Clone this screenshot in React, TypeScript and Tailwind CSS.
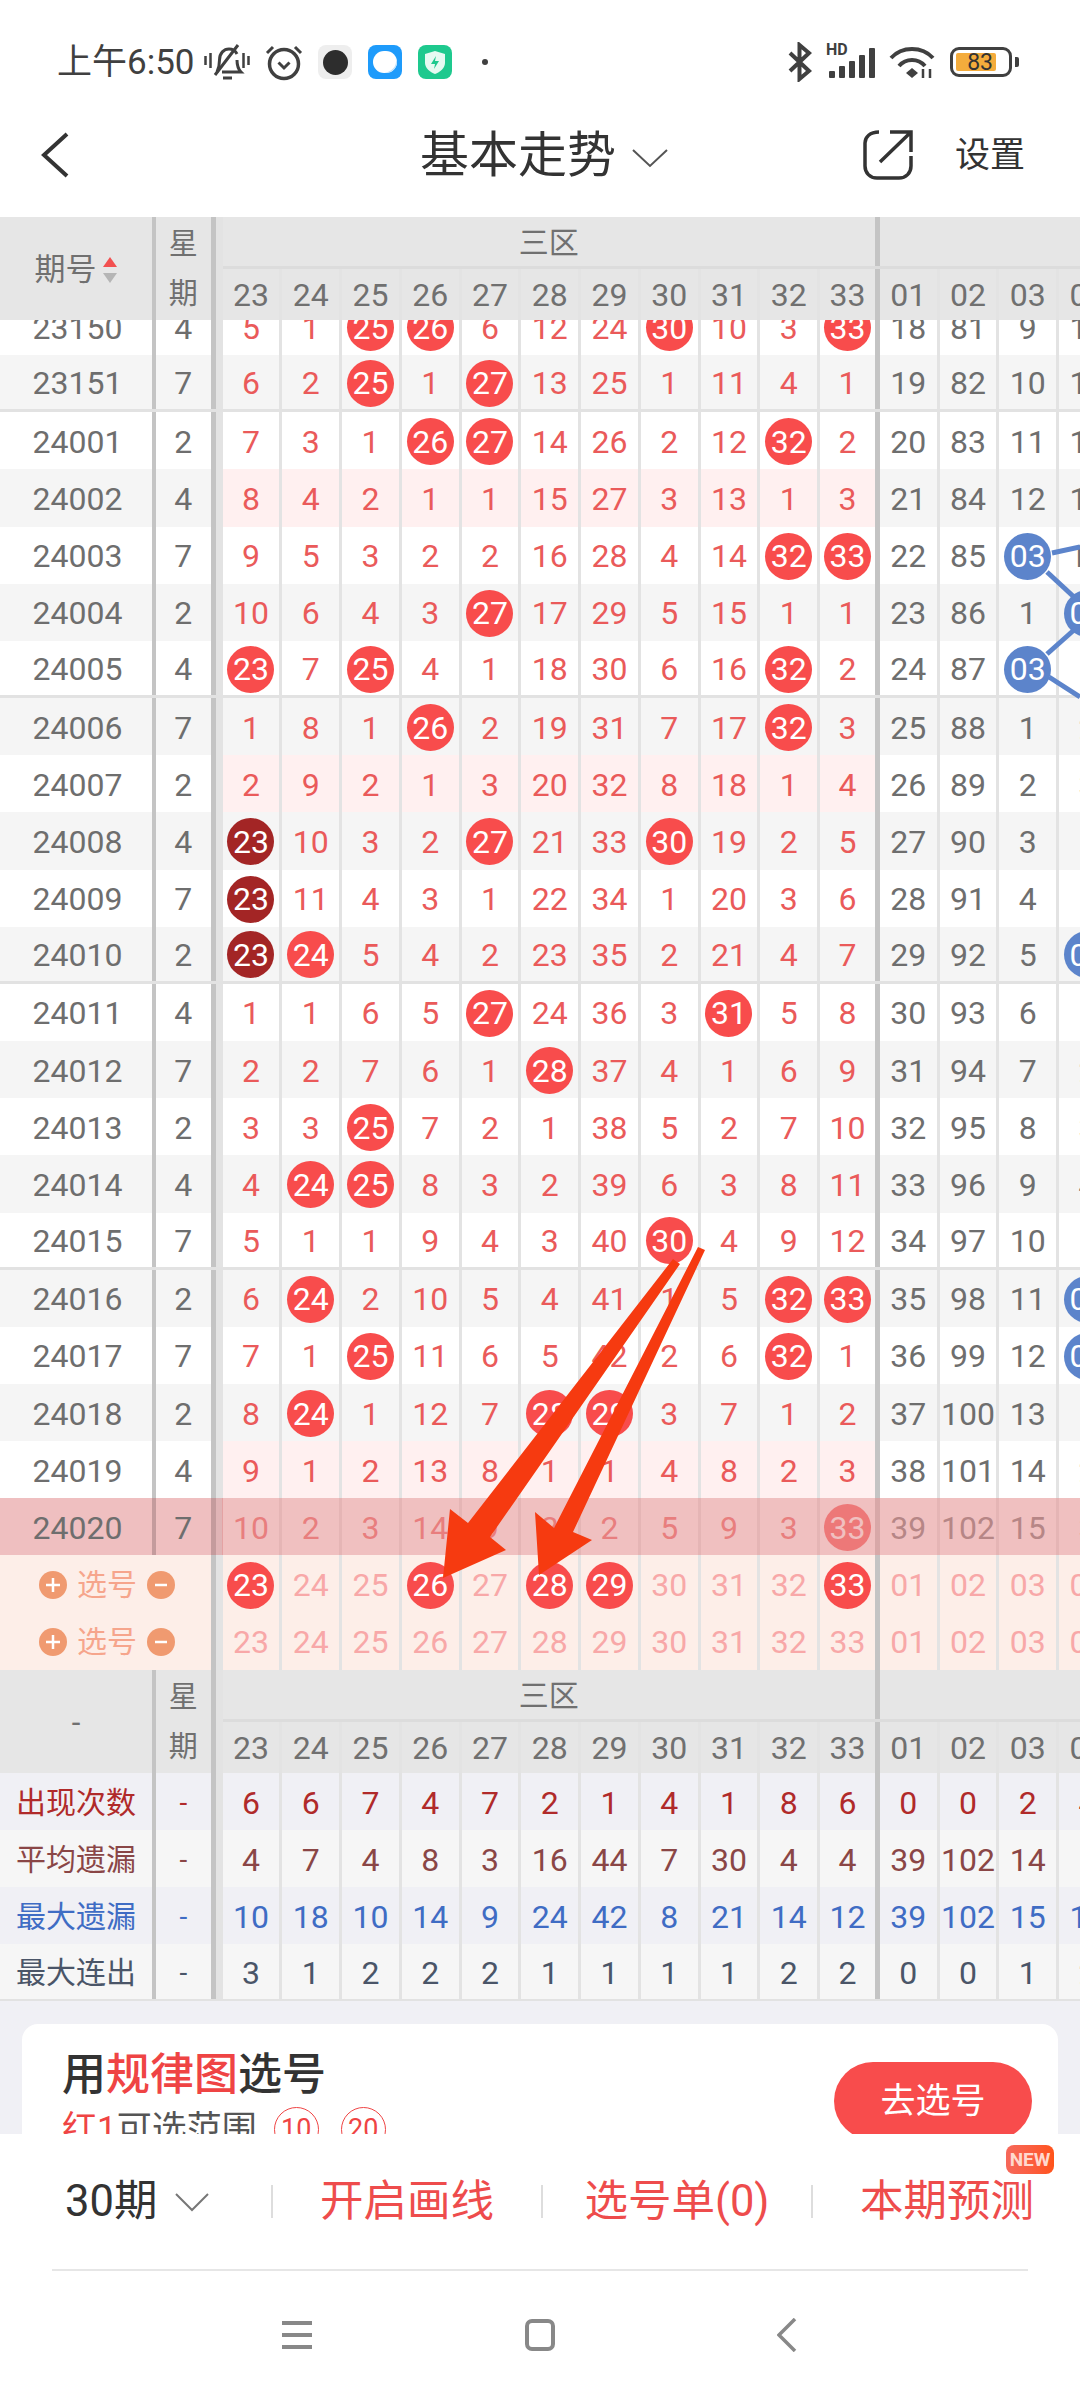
import { clsx } from 'clsx';

// Trend table rows: "*" red ball, "#" dark red ball, "@" blue ball
interface Row {
  id: string;
  week: string;
  cells: string;
  pink?: boolean;
  heavy?: boolean;
  band?: boolean;
}

const rows: Row[] = [
  { id: '23150', week: '4', cells: '5 1 *25 *26 6 12 24 *30 10 3 *33 18 81 9 10' },
  { id: '23151', week: '7', cells: '6 2 *25 1 *27 13 25 1 11 4 1 19 82 10 11', heavy: true },
  { id: '24001', week: '2', cells: '7 3 1 *26 *27 14 26 2 12 *32 2 20 83 11 12' },
  { id: '24002', week: '4', cells: '8 4 2 1 1 15 27 3 13 1 3 21 84 12 13', pink: true },
  { id: '24003', week: '7', cells: '9 5 3 2 2 16 28 4 14 *32 *33 22 85 @03 14' },
  { id: '24004', week: '2', cells: '10 6 4 3 *27 17 29 5 15 1 1 23 86 1 @04' },
  { id: '24005', week: '4', cells: '*23 7 *25 4 1 18 30 6 16 *32 2 24 87 @03 1', heavy: true },
  { id: '24006', week: '7', cells: '1 8 1 *26 2 19 31 7 17 *32 3 25 88 1 2' },
  { id: '24007', week: '2', cells: '2 9 2 1 3 20 32 8 18 1 4 26 89 2 3', pink: true },
  { id: '24008', week: '4', cells: '#23 10 3 2 *27 21 33 *30 19 2 5 27 90 3 5' },
  { id: '24009', week: '7', cells: '#23 11 4 3 1 22 34 1 20 3 6 28 91 4 5' },
  { id: '24010', week: '2', cells: '#23 *24 5 4 2 23 35 2 21 4 7 29 92 5 @04', heavy: true },
  { id: '24011', week: '4', cells: '1 1 6 5 *27 24 36 3 *31 5 8 30 93 6 1' },
  { id: '24012', week: '7', cells: '2 2 7 6 1 *28 37 4 1 6 9 31 94 7 2' },
  { id: '24013', week: '2', cells: '3 3 *25 7 2 1 38 5 2 7 10 32 95 8 3' },
  { id: '24014', week: '4', cells: '4 *24 *25 8 3 2 39 6 3 8 11 33 96 9 4' },
  { id: '24015', week: '7', cells: '5 1 1 9 4 3 40 *30 4 9 12 34 97 10 5', heavy: true },
  { id: '24016', week: '2', cells: '6 *24 2 10 5 4 41 1 5 *32 *33 35 98 11 @04' },
  { id: '24017', week: '7', cells: '7 1 *25 11 6 5 42 2 6 *32 1 36 99 12 @04' },
  { id: '24018', week: '2', cells: '8 *24 1 12 7 *28 *29 3 7 1 2 37 100 13 1' },
  { id: '24019', week: '4', cells: '9 1 2 13 8 1 1 4 8 2 3 38 101 14 2', pink: true },
  { id: '24020', week: '7', cells: '10 2 3 14 9 2 2 5 9 3 *33 39 102 15 3', band: true },
];

const numbers = '23 24 25 26 27 28 29 30 31 32 33 01 02 03 04'.split(' ');

const stats = [
  { label: '出现次数', cells: '6 6 7 4 7 2 1 4 1 8 6 0 0 2 4', text: 'text-[#b02a2a]', bg: 'bg-[#f0f0f5]' },
  { label: '平均遗漏', cells: '4 7 4 8 3 16 44 7 30 4 4 39 102 14 5', text: 'text-[#8a4646]', bg: 'bg-[#f6f6f6]' },
  { label: '最大遗漏', cells: '10 18 10 14 9 24 42 8 21 14 12 39 102 15 13', text: 'text-[#3f6cc4]', bg: 'bg-[#f0f0f5]' },
  { label: '最大连出', cells: '3 1 2 2 2 1 1 1 1 2 2 0 0 1 2', text: 'text-[#4a5568]', bg: 'bg-[#f6f6f6]' },
];

// Ball or plain number, the column after index 10 closes the red zone
function NumberCell({ value, index, text, bg, flat }: { value: string; index: number; text: string; bg?: string; flat?: boolean }) {
  const mark = value[0];
  const hasBall = mark === '*' || mark === '#' || mark === '@';
  return (
    <div
      className={clsx(
        'flex h-full w-[59.75px] shrink-0 items-center justify-center',
        !flat && 'pt-[2px]',
        index === 10 ? 'border-r-[5px] border-[#c4c4c4]' : 'border-r-[3px] border-[#e3e3e3]',
        bg,
      )}
    >
      {hasBall ? (
        <span
          className={clsx(
            'flex h-[47px] w-[47px] shrink-0 items-center justify-center rounded-full text-white',
            mark === '*' && 'bg-[#f84c4c]',
            mark === '#' && 'bg-[#a32525]',
            mark === '@' && 'bg-[#5c84cb]',
          )}
        >
          {value.slice(1)}
        </span>
      ) : (
        <span className={text}>{value}</span>
      )}
    </div>
  );
}

// The double rule between the fixed columns and the number grid
function Divider({ tint }: { tint?: boolean }) {
  return (
    <>
      <div className={clsx('h-full w-[5.5px] shrink-0', tint ? 'bg-[#c49b9d]' : 'bg-[#c4c4c4]')} />
      <div className={clsx('h-full w-[6.5px] shrink-0', tint ? 'bg-[#e0b4b6]' : 'bg-[#e3e3e3]')} />
    </>
  );
}

function TableHeader({ left }: { left: React.ReactNode }) {
  return (
    <div className="flex h-[103px] overflow-hidden bg-[#e6e6e6] text-[#707070]">
      <div className="flex h-full w-[156px] shrink-0 items-center justify-center border-r-[4px] border-[#c4c4c4] pt-[2px] text-[31px]">
        {left}
      </div>
      <div className="flex h-full w-[54.6px] shrink-0 flex-col items-center text-[29px]">
        <span className="flex h-[52px] items-center pt-[3px]">星</span>
        <span className="flex h-[51px] items-center">期</span>
      </div>
      <Divider />
      <div className="flex flex-col">
        <div className="flex h-[52px] border-b-[3px] border-[#dcdcdc]">
          <div className="flex w-[657.25px] shrink-0 items-center justify-center border-r-[5px] border-[#c4c4c4] pt-[3px] text-[30px]">
            三区
          </div>
        </div>
        <div className="flex h-[51px] text-[32px]">
          {numbers.map((n, i) => (
            <NumberCell key={n} value={n} index={i} text="text-[#707070]" flat />
          ))}
        </div>
      </div>
    </div>
  );
}

function TrendRow({ row, index }: { row: Row; index: number }) {
  const rowBg = index % 2 === 1 && !row.band ? 'bg-[#f5f5f5]' : 'bg-white';
  return (
    <div className={clsx('relative flex h-[57.17px] text-[#6e6e6e]', rowBg, row.heavy && 'border-b-[3px] border-[#e2e2e2]')}>
      <div
        className={clsx(
          'flex h-full w-[156px] shrink-0 items-center justify-center border-r-[4px] pt-[2px]',
          row.band ? 'border-[#c49b9d] bg-[#efbfc0]' : 'border-[#c4c4c4]',
        )}
      >
        <span className="pl-[3px]">{row.id}</span>
      </div>
      <div className={clsx('flex h-full w-[54.6px] shrink-0 items-center justify-center pt-[2px]', row.band && 'bg-[#efbfc0]')}>
        {row.week}
      </div>
      <Divider tint={row.band} />
      {row.cells.split(' ').map((value, i) => (
        <NumberCell
          key={i}
          value={value}
          index={i}
          text={i < 11 ? 'text-[#ea5a5a]' : 'text-[#6e6e6e]'}
          bg={row.pink && i < 11 ? 'bg-[#fff0f0]' : undefined}
        />
      ))}
      {/* Latest draw is washed out by a translucent band */}
      {row.band && <div className="absolute inset-y-0 left-[222px] right-0 bg-[#e69696]/60" />}
    </div>
  );
}

function Stepper({ minus }: { minus?: boolean }) {
  return (
    <svg width="28" height="28" viewBox="0 0 28 28" className="shrink-0">
      <circle cx="14" cy="14" r="14" fill="#f09a70" />
      <path d={minus ? 'M8 14H20' : 'M7 14H21M14 7V21'} stroke="#fff" strokeWidth="2.5" />
    </svg>
  );
}

function PickRow({ values }: { values: string[] }) {
  return (
    <div className="flex h-[57.17px] bg-[#fdeee8]">
      <div className="flex h-full w-[210.6px] shrink-0 items-center gap-[10px] pl-[39px] pt-[2px] text-[30px] text-[#f6a58c]">
        <Stepper />
        <span>选号</span>
        <Stepper minus />
      </div>
      <Divider />
      {values.map((value, i) => (
        <NumberCell key={i} value={value} index={i} text="text-[#f8a8a8]" />
      ))}
    </div>
  );
}

function StatusBar() {
  return (
    <div className="flex h-[90px] items-center pt-[34px] pl-[57px] text-[#404040]">
      <span className="w-[138px] shrink-0 whitespace-nowrap text-[35px]">上午6:50</span>
      <svg width="46" height="38" viewBox="0 0 46 38" className="ml-[9px] shrink-0" fill="none" stroke="#404040">
        <path d="M1.5 13V22M6.5 10V25M39.5 10V25M44.5 13V22" strokeWidth="2.5" />
        <path d="M13 29C15 25 15.5 21 15.5 17C15.5 10 20 6 25 6C28.5 6 31.5 8 33 11M33 17C33 22 34 26 37 29H18" strokeWidth="3" />
        <path d="M11 32L34 2M19 35H28" strokeWidth="3" />
      </svg>
      <svg width="38" height="38" viewBox="0 0 38 38" className="ml-[15px] shrink-0" fill="none" stroke="#404040">
        <circle cx="19" cy="21" r="14.5" strokeWidth="3.5" />
        <path d="M2 10L8 4M30 4L36 10M13.5 19.5L19 25L24.5 19.5" strokeWidth="3" />
      </svg>
      <div className="ml-[15px] flex h-[34px] w-[34px] shrink-0 items-center justify-center rounded-[8px] bg-[#eeeeee]">
        <div className="h-[25px] w-[25px] rounded-full bg-[#2d2d2d]" />
      </div>
      <svg width="34" height="34" viewBox="0 0 34 34" className="ml-[16px] shrink-0">
        <rect width="34" height="34" rx="8" fill="#1e9bfb" />
        <rect x="5" y="6" width="24" height="22" rx="11" fill="#ffffff" />
        <path d="M27 11C30 18 27 26 16 28C22 28 29 25 29 17Z" fill="#bfe2fb" />
      </svg>
      <svg width="34" height="34" viewBox="0 0 34 34" className="ml-[16px] shrink-0">
        <rect width="34" height="34" rx="8" fill="#1ec98e" />
        <path d="M17 6L27 9V18C27 23 22 27 17 29C12 27 7 23 7 18V9Z" fill="#e6faf2" />
        <path d="M18 11L13 19H17L16 24L21 16H17Z" fill="#1ec98e" />
      </svg>
      <span className="ml-[30px] h-[6px] w-[6px] shrink-0 rounded-full bg-[#404040]" />
      <svg width="26" height="40" viewBox="0 0 26 40" className="ml-[299px] shrink-0" fill="none" stroke="#404040" strokeWidth="4">
        <path d="M3 11L22 29L12.5 37V3L22 11L3 29" />
      </svg>
      <div className="relative ml-[15px] h-[32px] w-[49px] shrink-0">
        <span className="absolute left-[-2px] top-[-4px] text-[16px] font-bold leading-none">HD</span>
        <svg width="49" height="32" viewBox="0 0 49 32" className="absolute inset-0" fill="#404040">
          <rect x="1" y="25" width="6" height="7" rx="1" />
          <rect x="11" y="20" width="6" height="12" rx="1" />
          <rect x="21" y="15" width="6" height="17" rx="1" />
          <rect x="31" y="9" width="6" height="23" rx="1" />
          <rect x="41" y="2" width="6" height="30" rx="1" />
        </svg>
      </div>
      <svg width="46" height="34" viewBox="0 0 46 34" className="ml-[12px] shrink-0" fill="none" stroke="#404040">
        <path d="M2 13C13 1 33 1 44 13" strokeWidth="4" />
        <path d="M10 21C17 13 29 13 36 21" strokeWidth="4" />
        <path d="M17 28L23 23L29 28L23 33Z" fill="#404040" strokeWidth="0" />
        <path d="M34 24V33M41 24V33" strokeWidth="2.5" />
      </svg>
      <div className="ml-[15px] flex h-[30px] w-[62px] shrink-0 items-center rounded-[9px] border-[3.5px] border-[#404040] p-[3px]">
        <div className="flex h-full w-[40px] items-center justify-end rounded-[2px] bg-[#f4ac3c] pr-[3px] text-[23px] leading-none text-[#333]">
          83
        </div>
      </div>
      <div className="ml-[3px] h-[10px] w-[4px] shrink-0 rounded-r-[2px] bg-[#404040]" />
    </div>
  );
}

function NavBar() {
  return (
    <div className="flex h-[127px] items-center pt-[3px]">
      <svg width="28" height="46" viewBox="0 0 28 46" className="ml-[41px] shrink-0" fill="none" stroke="#333" strokeWidth="4">
        <path d="M26 2L3 23L26 44" />
      </svg>
      <span className="ml-[351px] w-[196px] shrink-0 text-[49px] leading-none text-[#333]">基本走势</span>
      <svg width="38" height="20" viewBox="0 0 38 20" className="ml-[15px] mt-[6px] shrink-0" fill="none" stroke="#555" strokeWidth="2">
        <path d="M2 2L19 18L36 2" />
      </svg>
      <svg width="52" height="52" viewBox="0 0 52 52" className="ml-[193px] shrink-0" fill="none" stroke="#333" strokeWidth="3.5">
        <path d="M17 3C8 3 3 8 3 14V37C3 44 8 49 15 49H37C44 49 49 44 49 37V27" />
        <path d="M18 33L49 3M28 3H49V23" />
      </svg>
      <span className="ml-[41px] shrink-0 text-[35px] leading-none text-[#333]">设置</span>
    </div>
  );
}

// Red arrows and the blue trend links lie over the table
function Overlay() {
  return (
    <svg width="1080" height="2400" viewBox="0 0 1080 2400" className="pointer-events-none absolute left-0 top-0">
      <g stroke="#5c84cb" strokeWidth="5" fill="none">
        <path d="M1052 553L1080 547" />
        <path d="M1047 572L1074 597" />
        <path d="M1074 630L1047 654" />
        <path d="M1049 677L1080 697" />
      </g>
      <g fill="#f63a10">
        <path d="M673 1259L680 1264L490 1537L506 1550L443 1578L450 1509L468 1523Z" />
        <path d="M698 1247L705 1250L573 1532L592 1540L539 1575L535 1512L554 1528Z" />
      </g>
    </svg>
  );
}

export default function App() {
  const pickFirst = '*23 24 25 *26 27 *28 *29 30 31 32 *33 01 02 03 04'.split(' ');

  return (
    <div className="relative h-[2400px] w-[1080px] overflow-hidden bg-white text-[32px] leading-none [font-family:Roboto,'Noto_Sans_CJK_SC',sans-serif]">
      <StatusBar />
      <NavBar />

      <TableHeader
        left={
          <div className="flex items-center gap-[5px]">
            <span>期号</span>
            <svg width="16" height="26" viewBox="0 0 16 26">
              <path d="M8 0L15 10H1Z" fill="#f25050" />
              <path d="M8 26L15 16H1Z" fill="#b5b5b5" />
            </svg>
          </div>
        }
      />

      <div className="h-[1350px] overflow-hidden">
        <div className="mt-[-22px]">
          {rows.map((row, i) => (
            <TrendRow key={row.id} row={row} index={i} />
          ))}
          <PickRow values={pickFirst} />
          <PickRow values={numbers} />
        </div>
      </div>

      <TableHeader left={<span>-</span>} />

      <div className="border-b-[2px] border-[#e2e2e2]">
        {stats.map((stat, i) => (
          <div key={stat.label} className={clsx('flex', i === 3 ? 'h-[55px]' : 'h-[57px]', stat.bg, stat.text)}>
            <div className="flex h-full w-[156px] shrink-0 items-center justify-center border-r-[4px] border-[#c4c4c4] pt-[2px] text-[30px]">
              {stat.label}
            </div>
            <div className="flex h-full w-[54.6px] shrink-0 items-center justify-center pt-[2px] text-[28px]">-</div>
            <Divider />
            {stat.cells.split(' ').map((value, j) => (
              <NumberCell key={j} value={value} index={j} text={stat.text} />
            ))}
          </div>
        ))}
      </div>

      {/* Chart picker card, cut off by the bottom bar */}
      <div className="h-[133px] overflow-hidden bg-[#f0f0f5] px-[22px] pt-[23px]">
        <div className="flex h-[150px] justify-between rounded-[16px] bg-white pl-[40px] pr-[26px]">
          <div>
            <div className="mt-[29px] text-[44px] font-medium leading-none text-[#333]">
              用<span className="text-[#ef4444]">规律图</span>选号
            </div>
            <div className="mt-[10px] flex items-center text-[35px] leading-none text-[#555]">
              <span className="text-[#ef4444]">红1</span>
              <span>可选范围</span>
              <span className="ml-[17px] flex h-[45px] w-[45px] items-center justify-center rounded-full border-[1.5px] border-[#ef4444] text-[27px] text-[#ef4444]">
                10
              </span>
              <span className="ml-[22px] flex h-[45px] w-[45px] items-center justify-center rounded-full border-[1.5px] border-[#ef4444] text-[27px] text-[#ef4444]">
                20
              </span>
            </div>
          </div>
          <div className="mt-[38px] flex h-[78px] w-[198px] items-center justify-center rounded-full bg-[#f84c4c] text-[35px] text-white">
            去选号
          </div>
        </div>
      </div>

      {/* Bottom actions */}
      <div className="flex h-[135px] items-center text-[43.5px] text-[#ee4c4c]">
        <div className="flex w-[271px] shrink-0 items-center pl-[65px] text-[#333]">
          <span className="w-[110px] shrink-0">30期</span>
          <svg width="34" height="20" viewBox="0 0 34 20" className="shrink-0" fill="none" stroke="#777" strokeWidth="2">
            <path d="M1 2L17 18L33 2" />
          </svg>
        </div>
        <div className="h-[33px] w-[2px] shrink-0 bg-[#dddddd]" />
        <div className="w-[268px] shrink-0 text-center">开启画线</div>
        <div className="h-[33px] w-[2px] shrink-0 bg-[#dddddd]" />
        <div className="w-[268px] shrink-0 text-center">选号单(0)</div>
        <div className="h-[33px] w-[2px] shrink-0 bg-[#dddddd]" />
        <div className="relative w-[268px] shrink-0 text-center">
          本期预测
          <span className="absolute left-[193px] top-[-35px] flex h-[29px] w-[48px] items-center justify-center rounded-[8px] bg-gradient-to-r from-[#f6685a] to-[#ff5318] text-[19px] font-bold text-[#ffd9cf]">
            NEW
          </span>
        </div>
      </div>
      <div className="mx-[52px] h-[2px] bg-[#e6e6e6]" />

      {/* System navigation */}
      <div className="flex h-[128px] items-center">
        <svg width="30" height="28" viewBox="0 0 30 28" className="ml-[282px] shrink-0" fill="none" stroke="#888" strokeWidth="4">
          <path d="M0 2H30M0 14H30M0 26H30" />
        </svg>
        <div className="ml-[213px] h-[32px] w-[30px] shrink-0 rounded-[7px] border-[4px] border-[#888888]" />
        <svg width="20" height="34" viewBox="0 0 20 34" className="ml-[222px] shrink-0" fill="none" stroke="#888" strokeWidth="3.5">
          <path d="M18 1L2 17L18 33" />
        </svg>
      </div>

      <Overlay />
    </div>
  );
}
